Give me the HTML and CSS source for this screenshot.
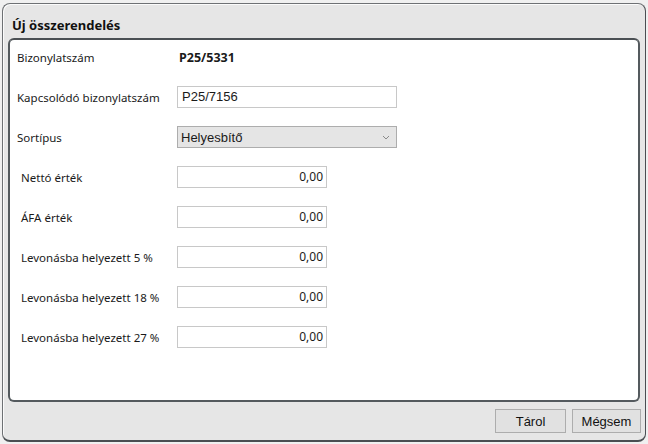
FILE: index.html
```html
<!doctype html>
<html>
<head>
    <title>Új összerendelés</title>
    <meta charset="utf-8">
    <link rel="stylesheet" href="styles.css">
</head><body>
    <div class="window">
        <div class="title">Új összerendelés</div>
        <div class="panel">
            <div class="form">
                <label>Bizonylatszám</label>
                <span class="value">P25/5331</span>

                <label>Kapcsolódó bizonylatszám</label>
                <div class="input wide">P25/7156</div>

                <label>Sortípus</label>
                <div class="select">
                    <span>Helyesbítő</span>
                    <svg width="8" height="5" viewBox="0 0 8 5"><path d="M1 1 L4 4 L7 1" fill="none" stroke="#8a8a8a" stroke-width="1"/></svg>
                </div>

                <label class="sub">Nettó érték</label>
                <div class="input num">0,00</div>

                <label class="sub">ÁFA érték</label>
                <div class="input num">0,00</div>

                <label class="sub">Levonásba helyezett 5 %</label>
                <div class="input num">0,00</div>

                <label class="sub">Levonásba helyezett 18 %</label>
                <div class="input num">0,00</div>

                <label class="sub">Levonásba helyezett 27 %</label>
                <div class="input num">0,00</div>
            </div>
        </div>
        <div class="footer">
            <button class="btn btn-save">Tárol</button>
            <button class="btn">Mégsem</button>
        </div>
    </div>
</body></html>
```

FILE: styles.css
```css
html, body {
    margin: 0;
    padding: 0;
    height: 444px;
    background: #f0f0f0;
    overflow: hidden;
}

body {
    font: 11.5px 'Noto Sans', 'Open Sans', sans-serif;
    color: #1a1a1a;
    padding: 3px 2px 2px 2px;
    box-sizing: border-box;
}

.window {
    height: 439px;
    box-sizing: border-box;
    display: flex;
    flex-direction: column;
    background: #e6e6e6;
    border: 1px solid #6e7174;
    border-right-color: #4a4e52;
    border-bottom: 2px solid #4a4e52;
    border-radius: 8px;
    box-shadow: inset 1px 1px 0 #fbfbfb;
}

.title {
    height: 34px;
    box-sizing: border-box;
    padding: 13px 0 0 9px;
    line-height: 16px;
    font-weight: 700;
    font-size: 13px;
    color: #111;
}

.panel {
    flex: 1;
    margin: 0 5px 0 5px;
    background: #fff;
    border: 2px solid #545a5e;
    border-top-color: #4b5054;
    border-radius: 6px;
    padding: 6px 0 0 7px;
}

.form {
    display: grid;
    grid-template-columns: 160px 220px;
    grid-auto-rows: 22px;
    row-gap: 18px;
    align-items: center;
}

.form label {
    white-space: nowrap;
}

.form label.sub {
    padding-left: 4px;
}

.value {
    font-weight: 700;
    padding-left: 2px;
    font-size: 12.5px;
}

.input {
    height: 22px;
    box-sizing: border-box;
    border: 1px solid #c8c8c8;
    background: #fff;
    font: 13px 'Liberation Sans', Arial, sans-serif;
    line-height: 20px;
    padding: 0 4px;
}

.input.num {
    width: 150px;
    text-align: right;
    font: 12px 'Noto Sans', 'Open Sans', sans-serif;
    line-height: 20px;
    padding-right: 3px;
}

.select {
    height: 22px;
    box-sizing: border-box;
    border: 1px solid #adadad;
    background: #e5e5e5;
    font: 13px 'Liberation Sans', Arial, sans-serif;
    display: flex;
    align-items: center;
    justify-content: space-between;
    padding: 0 6px 0 3px;
}

.footer {
    height: 38px;
    box-sizing: border-box;
    display: flex;
    justify-content: flex-end;
    gap: 6px;
    padding: 7px 4px 0 0;
}

.btn {
    width: 69px;
    height: 24px;
    background: #e1e1e1;
    border: 1px solid #adadad;
    font: 13px 'Liberation Sans', Arial, sans-serif;
    color: #111;
    padding: 0;
}

.btn-save {
    width: 71px;
}
```
